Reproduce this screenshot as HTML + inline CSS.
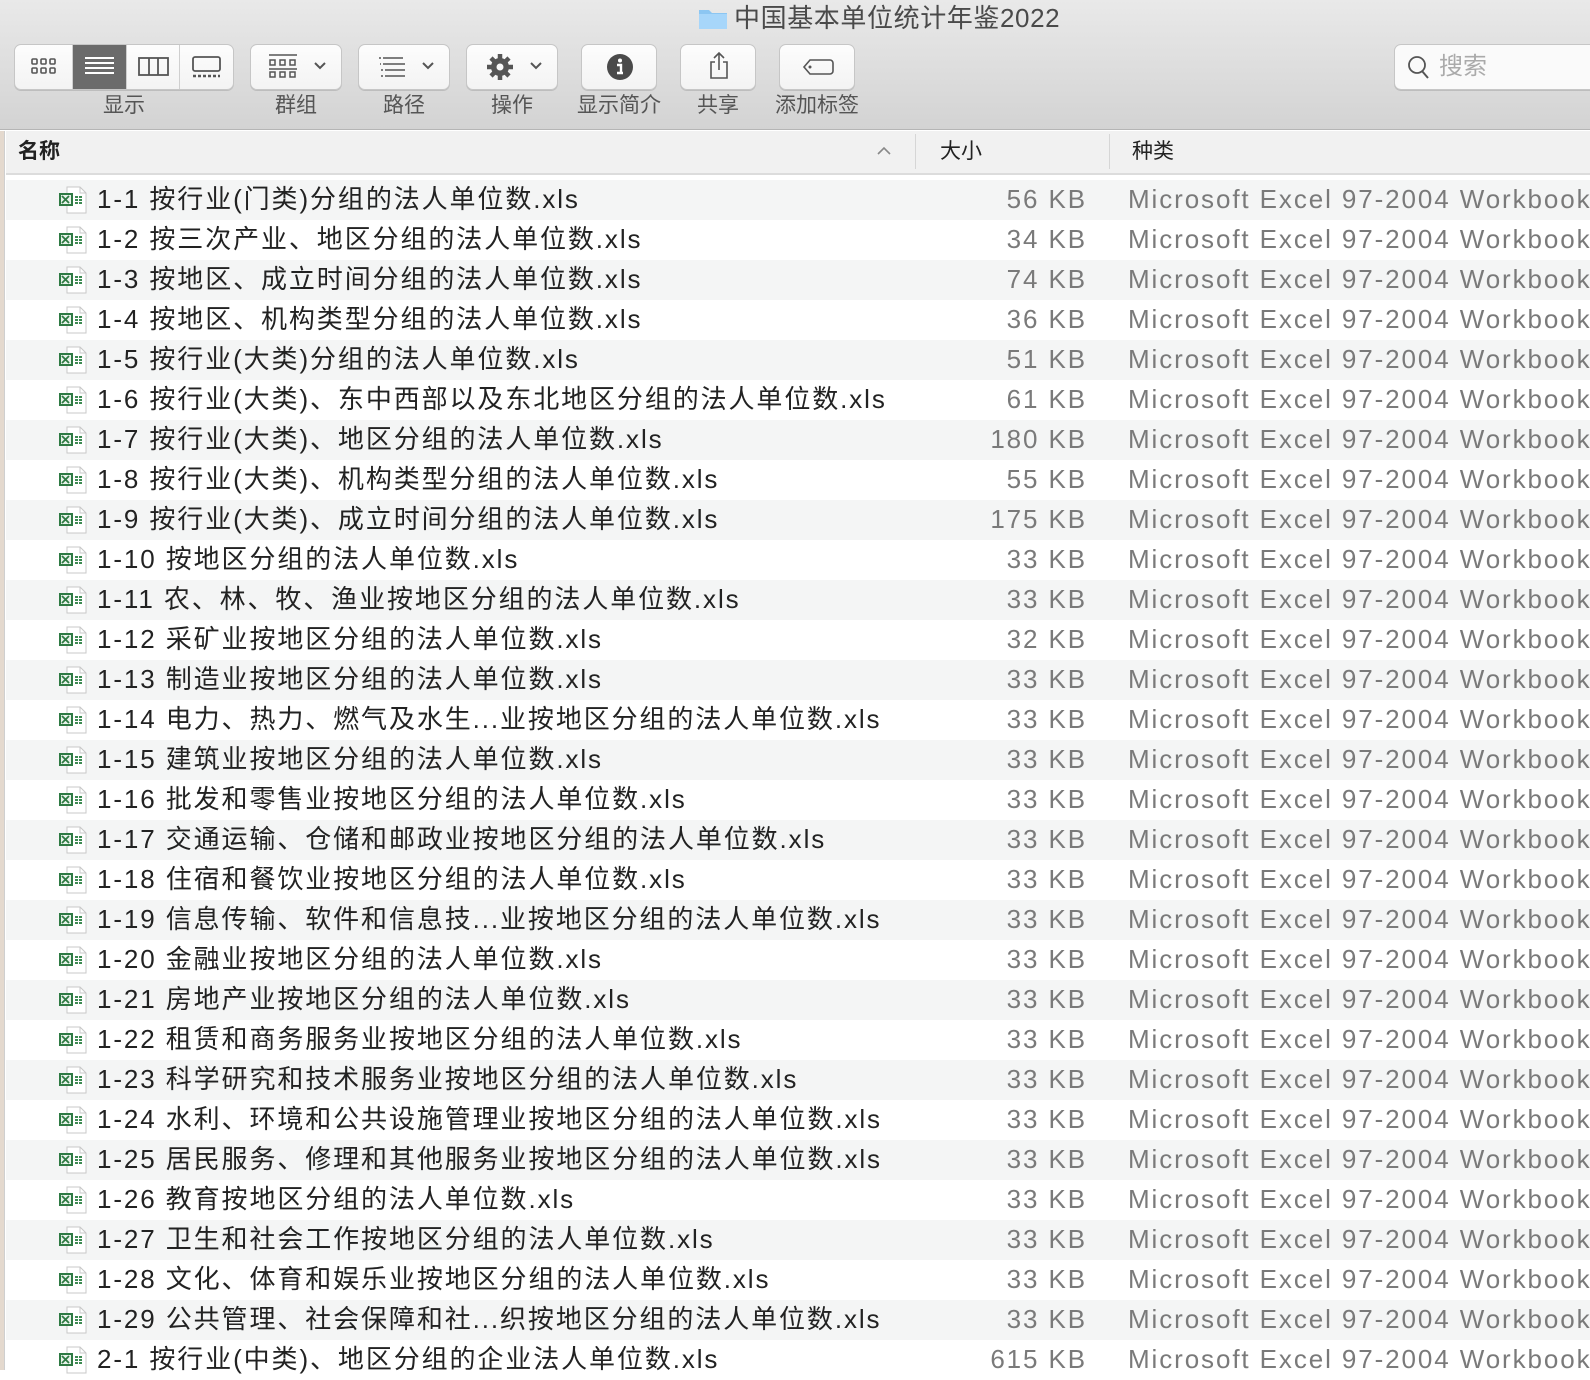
<!DOCTYPE html>
<html><head><meta charset="utf-8"><style>
*{margin:0;padding:0;box-sizing:border-box}
body{width:1590px;height:1370px;overflow:hidden;background:#fff;font-family:"Liberation Sans","Noto Sans CJK SC",sans-serif;position:relative}
#tb{position:absolute;left:0;top:0;width:1590px;height:130px;background:linear-gradient(#e9e9e9,#d3d3d3);border-bottom:1px solid #b5b5b5}
.title{position:absolute;left:698px;top:2px;font-size:26px;color:#4a4a4a;white-space:nowrap;line-height:32px;letter-spacing:0.6px}
.btn{position:absolute;top:44px;height:46px;background:linear-gradient(#fdfdfd,#f3f3f3);border:1px solid #c6c6c6;border-radius:7px;box-shadow:0 1px 0 #bdbdbd}
.lbl{position:absolute;top:92px;font-size:21px;color:#555;line-height:28px;text-align:center;white-space:nowrap}
.seg{position:absolute;top:0;height:44px;border-right:1px solid #cfcfcf}
#hdr{position:absolute;left:6px;top:131px;width:1584px;height:44px;background:#f1f1f1;border-bottom:2px solid #dcdcdc}
.h{position:absolute;top:6px;font-size:21px;color:#222;line-height:30px}
.sep{position:absolute;top:3px;width:1px;height:35px;background:#d6d6d6}
#left{position:absolute;left:0;top:131px;width:5px;height:1239px;background:#e4d9ce;border-right:1px solid #cfcfcf}
.row{position:absolute;left:6px;width:1584px;height:40px;font-size:26px;line-height:40px;white-space:nowrap;letter-spacing:1.9px}
.row.s{background:#f4f5f5}
.nm{position:absolute;left:91px;top:-1px;color:#222}
.sz{position:absolute;right:503px;top:-1px;color:#7a7a7a}
.kd{position:absolute;left:1122px;top:-1px;color:#7a7a7a}
.ic{position:absolute;left:52px;top:6px}
</style></head><body>
<div id="tb">
 <div class="title"><svg width="30" height="24" viewBox="0 0 30 24" style="vertical-align:-3px;margin-right:6px"><path d="M1 4h10l3 3h15v16H1z" fill="#8cc6f2"/><path d="M1 8h28v15H1z" fill="#a7d6fa"/></svg>中国基本单位统计年鉴2022</div>
 <div class="btn" style="left:14px;width:220px;overflow:hidden">
  <div class="seg" style="left:0;width:58px"><svg width="58" height="44"><g fill="none" stroke="#555" stroke-width="1.6"><rect x="17" y="14" width="5" height="5" rx="1"/><rect x="26" y="14" width="5" height="5" rx="1"/><rect x="35" y="14" width="5" height="5" rx="1"/><rect x="17" y="23" width="5" height="5" rx="1"/><rect x="26" y="23" width="5" height="5" rx="1"/><rect x="35" y="23" width="5" height="5" rx="1"/></g></svg></div>
  <div class="seg" style="left:58px;width:54px;background:#6b6b6b"><svg width="54" height="44"><g stroke="#fff" stroke-width="2"><path d="M12 13h29M12 18h29M12 23h29M12 28h29"/></g></svg></div>
  <div class="seg" style="left:112px;width:53px"><svg width="53" height="44"><rect x="12" y="13" width="29" height="17" fill="none" stroke="#555" stroke-width="1.8"/><path d="M22 13v17M31 13v17" stroke="#555" stroke-width="1.8"/></svg></div>
  <div class="seg" style="left:165px;width:55px;border:0"><svg width="55" height="44"><rect x="13" y="12" width="27" height="14" rx="2" fill="none" stroke="#555" stroke-width="1.8"/><path d="M13 31h27" stroke="#555" stroke-width="2.5" stroke-dasharray="3 2"/></svg></div>
 </div>
 <div class="lbl" style="left:14px;width:220px">显示</div>
 <div class="btn" style="left:250px;width:92px"><svg width="92" height="44"><g fill="none" stroke="#555" stroke-width="1.5"><path d="M18 10h28"/><rect x="19" y="15" width="5" height="5"/><rect x="29" y="15" width="5" height="5"/><rect x="39" y="15" width="5" height="5"/><path d="M18 24h28"/><rect x="19" y="27" width="5" height="5"/><rect x="29" y="27" width="5" height="5"/><rect x="39" y="27" width="5" height="5"/><path d="M64 18l5 5 5-5" stroke-width="2"/></g></svg></div>
 <div class="lbl" style="left:250px;width:92px">群组</div>
 <div class="btn" style="left:358px;width:92px"><svg width="92" height="44"><g fill="none" stroke="#555" stroke-width="1.6"><path d="M20 13h2M24 13h20M24 19h22M26 25h20M26 31h20M21 19h1M22 25h2M22 31h2"/><path d="M64 18l5 5 5-5" stroke-width="2"/></g></svg></div>
 <div class="lbl" style="left:358px;width:92px">路径</div>
 <div class="btn" style="left:466px;width:92px"><svg width="92" height="44"><g transform="translate(33 22)"><circle r="9" fill="#555"/><g stroke="#555" stroke-width="4.5"><path d="M0-13V13M-13 0H13M-9-9L9 9M-9 9L9-9"/></g><circle r="3.5" fill="#f8f8f8"/></g><path d="M64 18l5 5 5-5" fill="none" stroke="#555" stroke-width="2"/></svg></div>
 <div class="lbl" style="left:466px;width:92px">操作</div>
 <div class="btn" style="left:581px;width:76px"><svg width="76" height="44"><circle cx="38" cy="22" r="13" fill="#4a4a4a"/><circle cx="38" cy="15.5" r="2" fill="#fff"/><path d="M35 20h4v8h2M35 28h6" stroke="#fff" stroke-width="2.4" fill="none"/></svg></div>
 <div class="lbl" style="left:569px;width:100px">显示简介</div>
 <div class="btn" style="left:680px;width:76px"><svg width="76" height="44"><g fill="none" stroke="#555" stroke-width="1.6"><path d="M34 17h-4v16h16V17h-4M38 8v17M33 13l5-5 5 5"/></g></svg></div>
 <div class="lbl" style="left:680px;width:76px">共享</div>
 <div class="btn" style="left:779px;width:76px"><svg width="76" height="44"><path d="M30 15h20a3 3 0 0 1 3 3v8a3 3 0 0 1-3 3H30l-6-7z" fill="none" stroke="#555" stroke-width="1.6"/><circle cx="30" cy="22" r="1.5" fill="#555"/></svg></div>
 <div class="lbl" style="left:767px;width:100px">添加标签</div>
 <div class="btn" style="left:1394px;width:210px;background:#fafafa"><svg width="40" height="44"><circle cx="22" cy="20" r="8" fill="none" stroke="#555" stroke-width="1.8"/><path d="M27 26l6 7" stroke="#555" stroke-width="2"/></svg><span style="position:absolute;left:44px;top:5px;font-size:24px;color:#aaa;line-height:34px">搜索</span></div>
</div>
<div id="left"></div>
<div id="hdr">
 <div class="h" style="left:12px;font-weight:bold">名称</div>
 <svg style="position:absolute;left:870px;top:14px" width="16" height="12"><path d="M2 9l6-6 6 6" fill="none" stroke="#888" stroke-width="1.6"/></svg>
 <div class="sep" style="left:909px"></div>
 <div class="h" style="left:934px">大小</div>
 <div class="sep" style="left:1103px"></div>
 <div class="h" style="left:1126px">种类</div>
</div>
<div id="rows"></div>
<script>
var d=[["1-1 按行业(门类)分组的法人单位数.xls","56 KB"],["1-2 按三次产业、地区分组的法人单位数.xls","34 KB"],["1-3 按地区、成立时间分组的法人单位数.xls","74 KB"],["1-4 按地区、机构类型分组的法人单位数.xls","36 KB"],["1-5 按行业(大类)分组的法人单位数.xls","51 KB"],["1-6 按行业(大类)、东中西部以及东北地区分组的法人单位数.xls","61 KB"],["1-7 按行业(大类)、地区分组的法人单位数.xls","180 KB"],["1-8 按行业(大类)、机构类型分组的法人单位数.xls","55 KB"],["1-9 按行业(大类)、成立时间分组的法人单位数.xls","175 KB"],["1-10 按地区分组的法人单位数.xls","33 KB"],["1-11 农、林、牧、渔业按地区分组的法人单位数.xls","33 KB"],["1-12 采矿业按地区分组的法人单位数.xls","32 KB"],["1-13 制造业按地区分组的法人单位数.xls","33 KB"],["1-14 电力、热力、燃气及水生...业按地区分组的法人单位数.xls","33 KB"],["1-15 建筑业按地区分组的法人单位数.xls","33 KB"],["1-16 批发和零售业按地区分组的法人单位数.xls","33 KB"],["1-17 交通运输、仓储和邮政业按地区分组的法人单位数.xls","33 KB"],["1-18 住宿和餐饮业按地区分组的法人单位数.xls","33 KB"],["1-19 信息传输、软件和信息技...业按地区分组的法人单位数.xls","33 KB"],["1-20 金融业按地区分组的法人单位数.xls","33 KB"],["1-21 房地产业按地区分组的法人单位数.xls","33 KB"],["1-22 租赁和商务服务业按地区分组的法人单位数.xls","33 KB"],["1-23 科学研究和技术服务业按地区分组的法人单位数.xls","33 KB"],["1-24 水利、环境和公共设施管理业按地区分组的法人单位数.xls","33 KB"],["1-25 居民服务、修理和其他服务业按地区分组的法人单位数.xls","33 KB"],["1-26 教育按地区分组的法人单位数.xls","33 KB"],["1-27 卫生和社会工作按地区分组的法人单位数.xls","33 KB"],["1-28 文化、体育和娱乐业按地区分组的法人单位数.xls","33 KB"],["1-29 公共管理、社会保障和社...织按地区分组的法人单位数.xls","33 KB"],["2-1 按行业(中类)、地区分组的企业法人单位数.xls","615 KB"]];
var ic='<svg class="ic" width="30" height="28" viewBox="0 0 30 28"><path d="M9 1h13l6 6v20H9z" fill="#fff" stroke="#c8c8c8"/><path d="M22 1v6h6" fill="none" stroke="#c8c8c8"/><rect x="1" y="7" width="14" height="13" fill="#2e7a43"/><rect x="3" y="9" width="10" height="9" fill="#e8f2ea"/><path d="M4 10l7 7M11 10l-7 7" stroke="#2e7a43" stroke-width="1.8"/><path d="M17 10h3v2h-3zM21 10h3v2h-3zM17 13h3v2h-3zM21 13h3v2h-3zM17 16h3v2h-3zM21 16h3v2h-3z" fill="#3d8a52"/></svg>';
var h='';d.forEach(function(r,i){h+='<div class="row'+(i%2==0?' s':'')+'" style="top:'+(180+40*i)+'px">'+ic+'<span class="nm">'+r[0]+'</span><span class="sz">'+r[1]+'</span><span class="kd">Microsoft Excel 97-2004 Workbook</span></div>'});
document.getElementById('rows').innerHTML=h;
</script>
</body></html>
